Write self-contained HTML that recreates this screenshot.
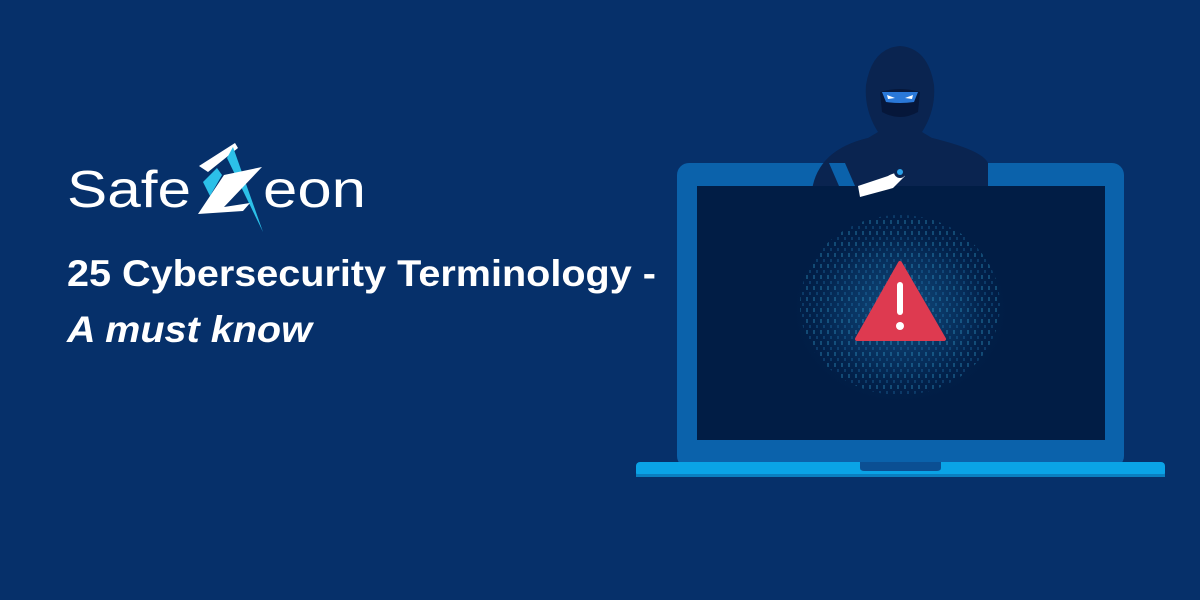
<!DOCTYPE html>
<html><head><style>
body{margin:0;width:1200px;height:600px;background:#06306a;overflow:hidden;position:relative;font-family:"Liberation Sans",sans-serif}
.t{position:absolute;left:67px;color:#fff;font-weight:bold;font-size:37px;letter-spacing:0;white-space:nowrap;transform:scaleX(1.07);transform-origin:0 0}
</style></head><body>
<svg width="1200" height="600" style="position:absolute;left:0;top:0">
<defs><radialGradient id="g" cx="0.5" cy="0.5" r="0.5"><stop offset="0" stop-color="#2a8fd0" stop-opacity="0.45"/><stop offset="0.6" stop-color="#1a6aa8" stop-opacity="0.2"/><stop offset="1" stop-color="#011d45" stop-opacity="0"/></radialGradient>
<pattern id="p" width="7" height="11" patternUnits="userSpaceOnUse"><rect x="1" y="0" width="2" height="4" fill="#3ab0e0" opacity="0.5"/><rect x="4" y="6" width="2" height="3" fill="#2a90d0" opacity="0.4"/></pattern></defs>
<!-- logo -->
<text x="67" y="207" fill="#fff" font-size="52" font-family="Liberation Sans" textLength="124" lengthAdjust="spacingAndGlyphs">Safe</text>
<text x="263" y="207" fill="#fff" font-size="52" font-family="Liberation Sans" textLength="103" lengthAdjust="spacingAndGlyphs">eon</text>
<path d="M199 166 L235 143 L238 148 L208 172 Z" fill="#fff"/>
<path d="M233 147 L263 232 L227 158 Z" fill="#2cc0e8"/>
<path d="M203 182 L217 168 L222 175 L210 196 Z" fill="#2cc0e8"/>
<path d="M224 175 L262 167 L224 207 L250 203 L243 211 L198 214 Z" fill="#fff"/>
<!-- hacker -->
<path d="M812 190 Q818 150 868 138 L878 132 Q864 110 866 85 Q872 48 900 46 Q928 48 934 85 Q936 110 922 132 L932 138 Q982 150 988 190 Z" fill="#0a2450"/>
<path d="M880 92 Q900 86 920 92 L918 112 Q900 122 882 112 Z" fill="#06173a"/>
<path d="M882 92 L918 92 L914 102 Q900 104 886 102 Z" fill="#2a78d8"/>
<path d="M887 95 L895 98 L888 99Z M913 95 L905 98 L912 99Z" fill="#fff"/>
<!-- laptop -->
<rect x="677" y="163" width="447" height="305" rx="12" fill="#0b62ab"/>
<path d="M812 190 Q818 150 868 138 L932 138 Q982 150 988 163 L988 186 L812 186 Z" fill="#0a2450"/>
<rect x="697" y="186" width="408" height="254" fill="#011d45"/>
<ellipse cx="900" cy="310" rx="110" ry="95" fill="url(#g)"/>
<ellipse cx="900" cy="305" rx="100" ry="90" fill="url(#p)" opacity="0.6"/>
<path d="M829 163 L845 163 L855 186 L839 186 Z" fill="#0b62ab"/>
<path d="M858 186 L888 176 Q898 170 905 176 L893 188 L860 197 Z" fill="#fff"/>
<circle cx="900" cy="172" r="6" fill="#0a2450"/><circle cx="900" cy="172" r="3" fill="#2aa0e8"/>
<path d="M900 263 L944 339 L857 339 Z" fill="#de3a50" stroke="#de3a50" stroke-width="4" stroke-linejoin="round"/>
<rect x="897" y="282" width="6" height="33" rx="3" fill="#fff"/><circle cx="900" cy="326" r="4" fill="#fff"/>
<rect x="636" y="462" width="529" height="15" rx="4" fill="#0aa3e6"/>
<rect x="636" y="474" width="529" height="3" fill="#0a7fc0"/>
<path d="M860 462 L941 462 L941 468 Q941 471 936 471 L865 471 Q860 471 860 468 Z" fill="#0b4f93"/>
</svg>
<div class="t" style="top:253px">25 Cybersecurity Terminology -</div>
<div class="t" style="top:309px;font-style:italic">A must know</div>
</body></html>
